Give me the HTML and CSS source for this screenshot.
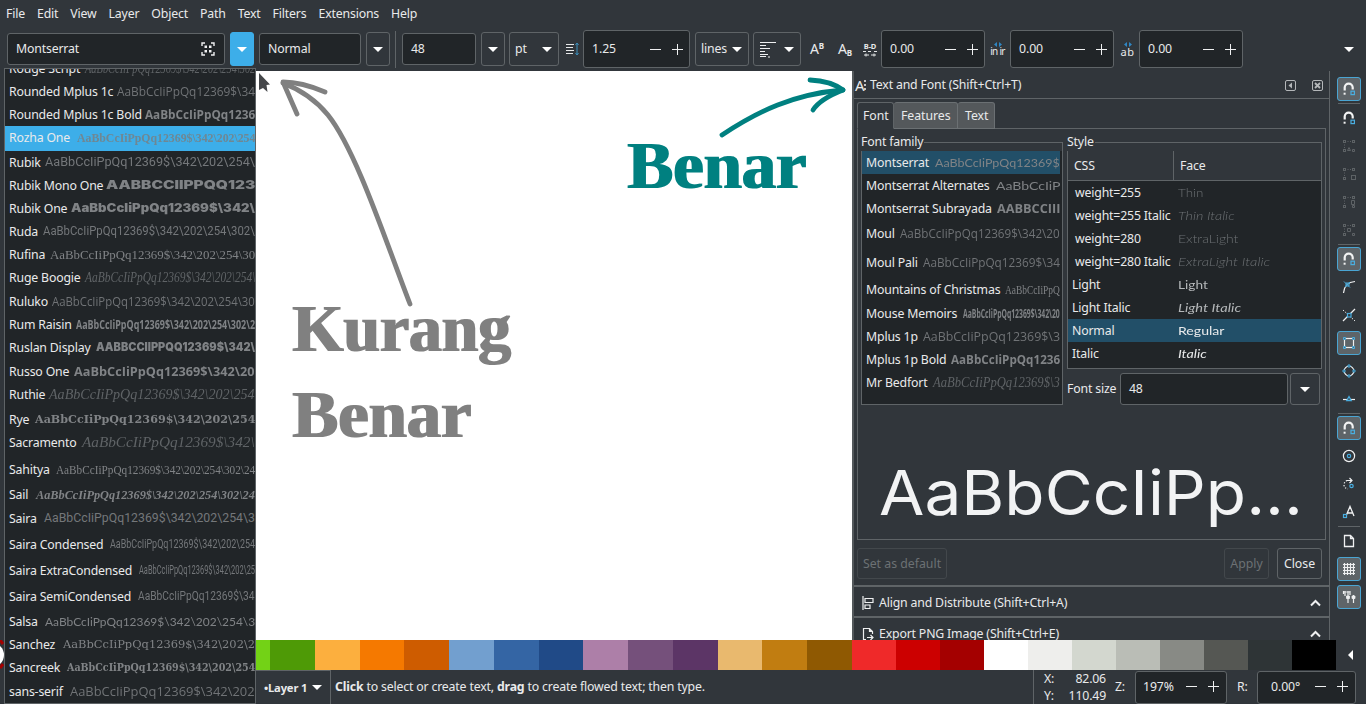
FILE: index.html
```html
<!DOCTYPE html>
<html lang="en">
<head>
<meta charset="utf-8">
<title>Text and Font</title>
<link rel="stylesheet" href="styles.css">
</head>
<body>
<svg class="defs" width="0" height="0">
  <defs>
    <filter id="fatten" x="-5%" y="-5%" width="110%" height="110%" color-interpolation-filters="sRGB"><feMorphology operator="dilate" radius="1 0"/></filter>
    <symbol id="magnet" viewBox="0 0 16 16"><path d="M3.700 9.500V6.600a4 4 0 0 1 8 0v2" fill="none" stroke="#f2f3f3" stroke-width="2.200"/><path d="M2.600 11.700h2v2h-2z" fill="#f2f3f3"/><rect x="10" y="10.200" width="3.400" height="3.400" fill="none" stroke="#4aaee0" stroke-width="1.200"/></symbol>
    <symbol id="nodes" viewBox="0 0 16 16"><g fill="none" stroke="#686d70"><rect x="2.5" y="2.5" width="2" height="2"/><rect x="11.5" y="2.5" width="2" height="2"/><rect x="2.5" y="11.5" width="2" height="2"/><path d="M6.5 3.5h1m1.500 0h1M3.500 6.500v1m0 1.500v1"/></g></symbol>
  </defs>
</svg>
<div class="app">
  <nav class="menubar"><span>File</span><span>Edit</span><span>View</span><span>Layer</span><span>Object</span><span>Path</span><span>Text</span><span>Filters</span><span>Extensions</span><span>Help</span></nav>

  <div class="toolbar">
    <div class="entry family">Montserrat<svg width="14" height="14" viewBox="0 0 14 14"><path d="M1 4V1h3M10 1h3v3M13 10v3h-3M4 13H1v-3" fill="none" stroke="#eff0f1" stroke-width="1.4"/><path d="M3.500 3.500h2.500v2.500h-2.500zM8 3.500h2.500v2.500h-2.500zM3.500 8h2.500v2.500h-2.500zM8 8h2.500v2.500h-2.500z" fill="#eff0f1"/></svg></div>
    <div class="btn drop active"><i class="tri"></i></div>
    <div class="entry weight">Normal</div>
    <div class="btn drop"><i class="tri"></i></div>
    <div class="vsep"></div>
    <div class="entry size">48</div>
    <div class="btn drop size-drop"><i class="tri"></i></div>
    <div class="btn combo unit">pt<i class="tri"></i></div>
    <svg class="lh-icon" width="14" height="14" viewBox="0 0 14 14"><path d="M1 2.500h8M1 5.500h7M1 8.500h8M1 11.500h7" stroke="#e6e8e9" stroke-width="1.100"/><path d="M12 1.500v11M10.500 3l1.500-2 1.500 2M10.500 11l1.500 2 1.500-2" fill="none" stroke="#3c8fbd" stroke-width="1"/></svg>
    <div class="spin line">1.25<i class="minus"></i><i class="plus"></i></div>
    <div class="btn combo lines">lines<i class="tri"></i></div>
    <div class="btn combo align"><svg width="17" height="17" viewBox="0 0 17 17"><path d="M0 1.500h16M0 4.500h6M0 7.500h10M0 10.500h5M0 13.500h8M0 15.500h6M8 16h2" stroke="#eff0f1" stroke-width="1.200"/></svg><i class="tri"></i></div>
    <div class="script-btn sup">A<small>B</small></div>
    <div class="script-btn sub">A<small>B</small></div>
    <div class="kern-icon bd"><b>B-D</b><svg width="14" height="7" viewBox="0 0 14 7"><path d="M0 1.500h3M5 1.500h3M11 1.500h3M1 5h5M8 5h5M3 3.500v3M11 3.500v3" stroke="#e3e5e6"/></svg></div>
    <div class="spin">0.00<i class="minus"></i><i class="plus"></i></div>
    <div class="kern-icon"><svg width="10" height="5" viewBox="0 0 10 5"><path d="M4 0v5L1 2.500zM6 0v5l3-2.500z" fill="#2f86c4"/></svg><span>in ir</span></div>
    <div class="spin">0.00<i class="minus"></i><i class="plus"></i></div>
    <div class="kern-icon wide"><svg width="10" height="5" viewBox="0 0 10 5"><path d="M4 0v5L1 2.500zM6 0v5l3-2.500z" fill="#2f86c4"/></svg><span>ab</span></div>
    <div class="spin">0.00<i class="minus"></i><i class="plus"></i></div>
    <i class="tri more"></i>
  </div>

  <div class="main">
    <svg class="canvas" width="596" height="569" viewBox="256 71 596 569">
      <path d="M259 73l11 11.500-3.500.5 1 7-4.500-4-4 2z" fill="#45474a"/>
      <g fill="none" stroke="#808080" stroke-width="4.800" stroke-linecap="round" stroke-linejoin="round"><path d="M410 304C386 242 356 150 328 115C315 99 301 90 283 83"/><path d="M325 92C311 86 298 82 283 82L297 114"/></g>
      <g fill="none" stroke="#008080" stroke-width="4.800" stroke-linecap="round" stroke-linejoin="round"><path d="M722 135C758 111 794 94 843 90"/><path d="M810 80Q831 81 843 90Q820 99 813 110"/></g>
      <g class="art" filter="url(#fatten)">
        <text x="627.500" y="188" textLength="179" lengthAdjust="spacingAndGlyphs" class="teal">Benar</text>
        <text x="292.500" y="351" textLength="218.500" lengthAdjust="spacingAndGlyphs">Kurang</text>
        <text x="292.500" y="437" textLength="179" lengthAdjust="spacingAndGlyphs">Benar</text>
      </g>
    </svg>

    <section class="dock">
      <header class="dock-title"><span class="a-icon">A<svg width="3" height="10" viewBox="0 0 3 10"><path d="M1 0v2M1 4v2M1 8v2" stroke="#e6e7e8" stroke-width="1.600"/></svg></span><span class="grow">Text and Font (Shift+Ctrl+T)</span>
        <svg width="11" height="11" viewBox="0 0 11 11"><rect x=".5" y=".5" width="10" height="10" rx="1.500" fill="none" stroke="#b4b7b9"/><path d="M7 2.500v6L3.500 5.500z" fill="#b4b7b9"/></svg>
        <svg width="11" height="11" viewBox="0 0 11 11"><rect x=".5" y=".5" width="10" height="10" rx="1.500" fill="none" stroke="#b4b7b9"/><path d="M3 3l5 5M8 3l-5 5" stroke="#b4b7b9" stroke-width="1.800"/></svg>
      </header>
      <div class="dock-body">
        <div class="tabs"><div class="tab on">Font</div><div class="tab">Features</div><div class="tab last">Text</div></div>
        <div class="page">
          <div class="page-cols">
            <div class="frame families"><span class="legend">Font family</span><div class="font-list" id="families"></div></div>
            <div class="style-col">
              <div class="frame styles"><span class="legend">Style</span>
                <div class="thead"><span>CSS</span><span>Face</span></div>
                <div id="faces"></div>
              </div>
              <div class="size-row"><label>Font size</label><div class="entry">48</div><div class="btn"><i class="tri"></i></div></div>
            </div>
          </div>
          <svg class="preview" width="460" height="90" viewBox="862 450 460 90"><text x="880" y="515" textLength="424" lengthAdjust="spacingAndGlyphs">AaBbCcIiPp...</text></svg>
        </div>
        <div class="actions"><div class="btn off">Set as default</div><div class="btn off apply">Apply</div><div class="btn close">Close</div></div>
      </div>
      <div class="fold"><svg width="12" height="14" viewBox="0 0 12 14"><path d="M1 0v14M3 2.500h8v4H3zM3 9h5v3.500H3z" fill="none" stroke="#eff0f1" stroke-width="1.200"/></svg><span class="grow">Align and Distribute (Shift+Ctrl+A)</span><svg width="11" height="8" viewBox="0 0 11 8"><path d="M1 6.500l4.500-4.500L10 6.500" fill="none" stroke="#eff0f1" stroke-width="2"/></svg></div>
      <div class="fold"><svg width="12" height="14" viewBox="0 0 12 14"><path d="M4 12.500H1.500V1.500h6l3 3V7M7.500 1.500v3h3M5 10.500h6M8.500 8l2.500 2.500L8.500 13" fill="none" stroke="#eff0f1" stroke-width="1.200"/></svg><span class="grow">Export PNG Image (Shift+Ctrl+E)</span><svg width="11" height="8" viewBox="0 0 11 8"><path d="M1 6.500l4.500-4.500L10 6.500" fill="none" stroke="#eff0f1" stroke-width="2"/></svg></div>
    </section>

    <aside class="snapbar">
      <div class="snap on"><svg><use href="#magnet"/></svg></div><hr>
      <div class="snap"><svg><use href="#magnet"/></svg></div>
      <div class="snap dim"><svg viewBox="0 0 16 16"><use href="#nodes"/><path d="M6.500 12.500L8 9.500l1.500 3zM11.500 11.500h2v2h-2z" fill="none" stroke="#686d70"/></svg></div>
      <div class="snap dim"><svg viewBox="0 0 16 16"><use href="#nodes"/><rect x="10.500" y="9.500" width="4" height="4" fill="none" stroke="#686d70"/></svg></div>
      <div class="snap dim"><svg viewBox="0 0 16 16"><use href="#nodes"/><path d="M10.500 6.500h3v4h-3zM11.500 11.500h2v2h-2z" fill="none" stroke="#686d70"/></svg></div>
      <div class="snap dim"><svg viewBox="0 0 16 16"><use href="#nodes"/><path d="M6.500 6.500h3v3h-3zM11.500 11.500h2v2h-2z" fill="none" stroke="#686d70"/></svg></div>
      <hr>
      <div class="snap on"><svg><use href="#magnet"/></svg></div>
      <div class="snap"><svg viewBox="0 0 16 16"><path d="M2.500 14C3 7 7 3 14 2.500" fill="none" stroke="#eff0f1" stroke-width="1.200"/><path d="M3 2.500l6 6M9 3l-5 5M5 4h3v3H5z" fill="none" stroke="#4aaee0"/></svg></div>
      <div class="snap"><svg viewBox="0 0 16 16"><path d="M2 14L14 2" stroke="#eff0f1" stroke-width="1.300"/><path d="M2 3l12 11" stroke="#eff0f1" stroke-dasharray="1.500 1.500"/><rect x="6.500" y="6.500" width="3.500" height="3.500" fill="#31363b" stroke="#4aaee0" stroke-width="1.200"/></svg></div>
      <div class="snap on"><svg viewBox="0 0 16 16"><rect x="3.500" y="3.500" width="9" height="9" fill="none" stroke="#eff0f1" stroke-width="1.200"/><path d="M2.500 2.500h2v2h-2zM11.500 2.500h2v2h-2zM2.500 11.500h2v2h-2zM11.500 11.500h2v2h-2z" fill="#5e6468" stroke="#4aaee0"/></svg></div>
      <div class="snap"><svg viewBox="0 0 16 16"><circle cx="8" cy="8" r="4.800" fill="none" stroke="#eff0f1" stroke-width="1.200"/><path d="M7 2h2v2H7zM7 12h2v2H7zM2 7h2v2H2zM12 7h2v2h-2z" fill="#31363b" stroke="#4aaee0"/></svg></div>
      <div class="snap"><svg viewBox="0 0 16 16"><path d="M2 8.500h12" stroke="#eff0f1" stroke-width="1.200"/><path d="M8 5.500l2.200 4H5.800z" fill="#31363b" stroke="#4aaee0" stroke-width="1.300"/></svg></div>
      <hr>
      <div class="snap on"><svg><use href="#magnet"/></svg></div>
      <div class="snap"><svg viewBox="0 0 16 16"><circle cx="8" cy="8" r="5.600" fill="none" stroke="#eff0f1" stroke-width="1.200"/><circle cx="8" cy="8" r="1.700" fill="none" stroke="#4aaee0" stroke-width="1.200"/></svg></div>
      <div class="snap"><svg viewBox="0 0 16 16"><path d="M9 4.500H6Q3 6 3 9t4 4" fill="none" stroke="#eff0f1" stroke-width="1.200" stroke-dasharray="1.300 1.600"/><path d="M6 4.500h5M8.500 2l2.500 2.500L8.500 7" fill="none" stroke="#eff0f1" stroke-width="1.200"/><circle cx="10.500" cy="10" r="1.700" fill="none" stroke="#4aaee0" stroke-width="1.200"/></svg></div>
      <div class="snap"><svg viewBox="0 0 16 16"><path d="M5 12L9 2.500 13 12M6.500 9h5" fill="none" stroke="#eff0f1" stroke-width="1.300"/><rect x="2.500" y="10.500" width="3" height="3" fill="#31363b" stroke="#4aaee0" stroke-width="1.200"/></svg></div>
      <hr>
      <div class="snap"><svg viewBox="0 0 16 16"><path d="M3.500 2.500h6l3 3v8h-9zM9.500 2.500v3h3" fill="none" stroke="#eff0f1" stroke-width="1.300"/></svg></div>
      <div class="snap on"><svg viewBox="0 0 16 16"><path d="M2 3.500h12M2 6.500h12M2 9.500h12M2 12.500h12M3.500 2v12M6.500 2v12M9.500 2v12M12.500 2v12" stroke="#eff0f1" stroke-width="1.200"/></svg></div>
      <div class="snap on"><svg viewBox="0 0 16 16"><path d="M4 2v5M2.500 2v3M7 2v12M9 2v4M12.500 6v8" stroke="#eff0f1" stroke-width="1.200"/><path d="M2 3h7M5.500 7h3v2.500h-3zM11 7h3v2.500h-3z" fill="#eff0f1" stroke="#eff0f1" stroke-width=".8"/></svg></div>
    </aside>
  </div>

  <div class="palette">
    <div class="edge"><svg width="5" height="30" viewBox="0 0 5 30"><circle cx="-8" cy="15" r="12" fill="#fff"/><path d="M0 0l3 4M0 28l3-4" stroke="#a40000" stroke-width="3"/></svg></div>
    <div class="swatches hues"><i class="lime"></i><i class="c1"></i><i class="c2"></i><i class="c3"></i><i class="c4"></i><i class="c5"></i><i class="c6"></i><i class="c7"></i><i class="c8"></i><i class="c9"></i><i class="c10"></i><i class="c11"></i><i class="c12"></i><i class="c13"></i></div>
    <div class="swatches greys"><i class="r1"></i><i class="r2"></i><i class="r3"></i><i class="g1"></i><i class="g2"></i><i class="g3"></i><i class="g4"></i><i class="g5"></i><i class="g6"></i><i class="g7"></i><i class="g8"></i></div>
    <svg width="30" height="30" viewBox="0 0 30 30"><path d="M17 10v10l-5-5z" fill="#fff"/></svg>
  </div>

  <footer class="status">
    <div class="layer">•Layer 1<i class="tri"></i></div>
    <div class="hint"><b>Click</b> to select or create text, <b>drag</b> to create flowed text; then type.</div>
    <div class="coords"><span>X:</span><span>82.06</span><span>Y:</span><span>110.49</span></div>
    <span class="zlabel">Z:</span><div class="spin zoom">197%<i class="minus"></i><i class="plus"></i></div>
    <span class="rlabel">R:</span><div class="spin rot">0.00°<i class="minus"></i><i class="plus"></i></div>
  </footer>

  <div class="popup"><div class="font-list" id="popup-list"></div></div>
</div>
<script src="app.js"></script>
</body>
</html>
```
FILE: styles.css
```css
* { box-sizing: border-box; }
body { margin: 0; background: #31363b; overflow: hidden; }
.defs { position: absolute; }
.app { position: relative; width: 1366px; height: 704px; display: flex; flex-direction: column; overflow: hidden; font: 12.3px/18px "Noto Sans", sans-serif; letter-spacing: -.17px; color: #e9eaeb; background: #31363b; }
svg { display: block; flex: none; }
i { font-style: normal; }

.menubar { height: 27px; display: flex; align-items: center; gap: 12px; padding-left: 6px; }
.toolbar { height: 44px; display: flex; align-items: center; padding-left: 7px; }
.toolbar > * { flex: none; }
.entry { height: 32px; border: 1px solid #5f6467; border-radius: 3px; background: #212528; display: flex; align-items: center; padding: 0 9px 0 8px; }
.btn { height: 34px; border: 1px solid #5f6467; border-radius: 3px; display: flex; align-items: center; justify-content: center; }
.tri { width: 0; height: 0; border: 5px solid transparent; border-top-color: #fff; border-bottom: 0; }
.drop { width: 24px; }
.drop.active { background: #3daee9; border-color: #3daee9; margin: 0 5px; }
.entry.family { width: 218px; justify-content: space-between; }
.entry.weight { width: 102px; margin-right: 5px; }
.vsep { width: 1px; height: 37px; background: #5f6467; margin: 0 6px 0 5px; }
.entry.size { width: 74px; margin-right: 5px; }
.size-drop { width: 24px; margin-right: 4px; }
.combo { justify-content: space-between; padding: 0 6px 0 5px; }
.unit { width: 50px; }
.lh-icon { margin: 0 4px 0 6px; }
.spin { width: 104px; height: 38px; border: 1px solid #5f6467; border-radius: 3px; background: #212528; display: flex; align-items: center; padding: 0 6px 0 8px; letter-spacing: -.1px; }
.spin.line { width: 107px; margin-right: 5px; }
.minus, .plus { width: 11px; height: 11px; background: linear-gradient(#eff0f1, #eff0f1) center / 11px 1px no-repeat; }
.minus { margin-left: auto; margin-right: 11px; }
.plus { background: linear-gradient(#eff0f1, #eff0f1) center / 11px 1px no-repeat, linear-gradient(#eff0f1, #eff0f1) center / 1px 11px no-repeat; }
.lines { width: 54px; margin-right: 4px; }
.align { width: 48px; padding-left: 6px; margin-right: 9px; }
.script-btn { width: 14px; height: 20px; display: flex; font: 14px/20px "Noto Sans", sans-serif; margin-right: 14px; }
.script-btn small { font-size: 8px; line-height: 13px; font-weight: 700; }
.script-btn.sub { margin-right: 11px; }
.sub small { padding-top: 7px; }
.kern-icon { width: 25px; display: flex; flex-direction: column; align-items: center; font: 10px/9px "Noto Sans", sans-serif; letter-spacing: -.7px; }
.kern-icon.bd { width: 14px; margin-right: 4px; font-size: 7.5px; line-height: 8px; letter-spacing: -.2px; }
.kern-icon.wide { font-size: 11px; letter-spacing: .5px; padding-left: 2px; }
.more { margin-left: 101px; }

.main { height: 569px; display: flex; padding-left: 256px; }
.canvas { background: #fff; }
.art text { font: 700 68px "Liberation Serif", serif; letter-spacing: 0; fill: #808080; }
.art .teal { fill: #008080; }

.dock { width: 478px; overflow: hidden; border-left: 2px solid #53585b; border-right: 1px solid #5f6467; display: flex; flex-direction: column; }
.dock > * { flex: none; }
.grow { flex: 1; }
.dock-title { height: 27px; display: flex; align-items: center; padding: 1px 6px 0 1px; gap: 0; }
.dock-title > svg { margin-left: 16px; }
.a-icon { display: flex; align-items: center; width: 15px; font-size: 15px; font-weight: 400; }
.dock-body { height: 489px; border-top: 1px solid #5f6467; border-bottom: 2px solid #5f6467; padding: 3px 3px 0 3px; }
.tabs { display: flex; height: 27px; position: relative; z-index: 1; }
.tab { height: 27px; border: 1px solid #6b7073; border-left: 0; border-radius: 3px 3px 0 0; background: #54585b; padding: 4px 7px; width: 64px; text-align: center; letter-spacing: -.05px; }
.tab.on { width: 37px; padding: 4px 5px; background: #31363b; border: 1px solid #5f6467; border-bottom-color: #31363b; }
.tab.last { width: 37px; }
.page { height: 412px; margin-top: -1px; border: 1px solid #5f6467; padding: 4px 3px 0; }
.page-cols { display: flex; gap: 4px; padding-top: 9px; height: 317px; }
.frame { position: relative; border: 1px solid #5f6467; }
.legend { position: absolute; left: -1px; top: -10px; background: #31363b; padding-right: 1px; }
.families { width: 202px; height: 263px; background: #212528; padding: 8px 2px 0 0; overflow: visible; }
.families::before { content: ""; position: absolute; left: 0; right: 0; top: 0; height: 8px; background: #31363b; }
.families .legend { z-index: 1; }
.families .name { padding-left: 4px; }
.style-col { width: 255px; }
.styles { height: 227px; background: #212528; }
.thead { height: 38px; background: #31363b; border-bottom: 1px solid #5f6467; display: flex; padding-top: 8px; }
.thead span { flex: 1; padding: 6px 0 0 6px; }
.thead span:first-child { flex: 0 0 106px; border-right: 1px solid #5f6467; }
.face-row { height: 23px; line-height: 23.500px; display: flex; white-space: nowrap; }
.face-row.sel, .font-row.sel { background: #224f68; }
.face-row > :first-child { flex: 0 0 110px; padding-left: 4px; }
.face-row.odd > :first-child { padding-left: 7px; }
.size-row { display: flex; align-items: center; margin-top: 4px; }
.size-row label { width: 53px; padding-bottom: 1px; }
.size-row .entry { width: 168px; margin-right: 2px; }
.size-row .btn { width: 30px; height: 32px; }
.preview text { font: 400 62px Inter, sans-serif; letter-spacing: 0; fill: #f2f3f4; }
.actions { display: flex; padding: 8px 4px 0 0; letter-spacing: 0; }
.actions .btn { height: 31px; width: 45px; }
.actions .btn.off { color: #6c7174; border-color: #43484c; }
.actions .btn.off:first-child { width: 90px; }
.actions .apply { margin: 0 8px 0 auto; }
.fold { height: 31px; border-bottom: 2px solid #5f6467; display: flex; align-items: center; padding: 2px 8px 0; gap: 5px; }

.snapbar { width: 36px; padding: 6px 0 0 7px; display: flex; flex-direction: column; gap: 4.050px; }
.snap { width: 24px; height: 24px; padding: 3px; border: 1px solid transparent; flex: none; border-radius: 3px; }
.snap svg { width: 16px; height: 16px; }
.snap.on { background: #5e6468; border-color: #4aa5d3; }
.snap.dim { opacity: .8; }
.snapbar hr { width: 22px; height: 1px; margin: -2.200px 0 -2px 1px; border: 0; background: #5f6467; flex: none; }

.palette { height: 30px; display: flex; }
.edge { width: 256px; }
.swatches { display: flex; }
.swatches i { flex: 1; }
.hues { width: 596px; }
.greys { width: 484px; }
.swatches .lime { flex: 0 0 14px; background: #73d216; }
.c1 { background: #4e9a06; } .c2 { background: #fcaf3e; } .c3 { background: #f57900; } .c4 { background: #ce5c00; }
.c5 { background: #729fcf; } .c6 { background: #3465a4; } .c7 { background: #204a87; } .c8 { background: #ad7fa8; }
.c9 { background: #75507b; } .c10 { background: #5c3566; } .c11 { background: #e9b96e; } .c12 { background: #c17d11; }
.c13 { background: #8f5902; } .r1 { background: #ef2929; } .r2 { background: #c00; } .r3 { background: #a40000; }
.g1 { background: #fff; } .g2 { background: #eeeeec; } .g3 { background: #d3d7cf; } .g4 { background: #babdb6; }
.g5 { background: #888a85; } .g6 { background: #555753; } .g7 { background: #2e3436; } .g8 { background: #000; }

.status { height: 34px; display: flex; align-items: center; padding-left: 256px; }
.layer { width: 75px; height: 34px; border: 1px solid #5f6467; border-left: 0; border-bottom: 0; display: flex; align-items: center; justify-content: space-between; padding: 0 8px; font-weight: 700; font-size: 11.200px; }
.hint { padding-left: 4px; width: 702px; }
.coords { width: 73px; height: 34px; border-left: 1px solid #5f6467; padding-left: 10px; display: grid; grid-template-columns: 20px 42px; line-height: 17px; }
.coords span:nth-child(even) { text-align: right; }
.zlabel { width: 29px; padding-left: 9px; }
.status .spin { height: 33px; padding: 0 7px 1px; }
.zoom { width: 92px; }
.rlabel { width: 30px; padding-left: 10px; }
.rot { width: 99px; }
.status .rot { padding-left: 13px; }

.popup { position: absolute; left: 4px; top: 68px; width: 252px; height: 636px; background: #212528; border: 1px solid #5f6467; overflow: hidden; }
.popup .font-list { margin-top: -12px; }
.popup .name { padding-left: 4px; }
.popup .font-row.sel { background: #3daee9; }
.popup .font-row.sel .sample { color: #6f8793; }
.font-list { overflow: hidden; }
.font-row { display: flex; line-height: 23.500px; white-space: nowrap; overflow: hidden; }
.name { flex: none; }
.sample { flex: none; display: inline-block; transform-origin: 0 50%; color: #808386; letter-spacing: 0; }
.s-sans { font-family: Roboto, sans-serif; font-weight: 400; color: #74777a; }
.s-mont { font-family: Lato, sans-serif; }
.s-open { font-family: "Open Sans", sans-serif; font-weight: 400; color: #707376; }
.s-bold { font-family: "Open Sans", sans-serif; font-weight: 700; }
.s-black { font-family: Inter, sans-serif; font-weight: 900; font-size: 11.500px; }
.s-serif { font-family: "Liberation Serif", serif; font-size: 13.500px; }
.s-slab { font-family: "DejaVu Serif", serif; font-size: 11.500px; }
.s-sbold { font-family: "DejaVu Serif", serif; font-weight: 700; font-size: 11.500px; }
.s-fat { font-family: "Liberation Serif", serif; font-weight: 700; font-size: 13px; }
.s-script { font-family: "Liberation Serif", serif; font-style: italic; font-size: 14px; color: #5f6366; }
.s-sail { font-family: "Liberation Serif", serif; font-style: italic; font-weight: 700; font-size: 13px; }
.face { font-family: Lato, sans-serif; display: inline-block; transform-origin: 0 50%; letter-spacing: 0; }
.f-dim { color: #6c7073; font-weight: 300; }
.f-light { color: #b4b7b9; }
.f-reg { color: #e9eaeb; }
.it { font-style: italic; }
```
FILE: app.js
```js
const BASE = 'AaBbCcIiPpQq12369$';
const CAPS = 'AABBCCIIPPQQ12369$';
const fonts = [
  // name, row height, sample offset, sample text, sample class
  ['Rouge Script', 23, 80, BASE + '\\342\\202\\254\\302', 's-script'],
  ['Rounded Mplus 1c', 23, 112, BASE + '\\34', 's-open'],
  ['Rounded Mplus 1c Bold', 23, 140, 'AaBbCcIiPpQq1236', 's-bold'],
  ['Rozha One', 25, 72, BASE + '\\342\\202\\254', 's-fat', true],
  ['Rubik', 23, 40, BASE + '\\342\\202\\254\\', 's-sans'],
  ['Rubik Mono One', 23, 101, 'AABBCCIIPPQQ123', 's-black'],
  ['Rubik One', 23, 66, BASE + '\\342\\', 's-black'],
  ['Ruda', 23, 38, BASE + '\\342\\202\\254\\302\\', 's-sans'],
  ['Rufina', 23, 45, BASE + '\\342\\202\\254\\30', 's-serif'],
  ['Ruge Boogie', 24, 80, BASE + '\\342\\202\\254\\', 's-script'],
  ['Ruluko', 23, 47, BASE + '\\342\\202\\254\\30', 's-open'],
  ['Rum Raisin', 23, 71, BASE + '\\342\\202\\254\\302\\2', 's-bold'],
  ['Ruslan Display', 24, 91, CAPS + '\\342\\', 's-black'],
  ['Russo One', 23, 69, BASE + '\\342\\20', 's-bold'],
  ['Ruthie', 25, 44, BASE + '\\342\\202\\254', 's-script'],
  ['Rye', 23, 30, BASE + '\\342\\202\\254', 's-sbold'],
  ['Sacramento', 27, 77, BASE + '\\342\\', 's-script'],
  ['Sahitya', 25, 51, BASE + '\\342\\202\\254\\302\\24', 's-serif'],
  ['Sail', 24, 31, BASE + '\\342\\202\\254\\302\\24', 's-sail'],
  ['Saira', 26, 39, BASE + '\\342\\202\\254\\3', 's-sans'],
  ['Saira Condensed', 26, 105, BASE + '\\342\\202\\254', 's-sans'],
  ['Saira ExtraCondensed', 26, 134, BASE + '\\342\\202\\25', 's-sans'],
  ['Saira SemiCondensed', 25, 133, BASE + '\\34', 's-sans'],
  ['Salsa', 23, 40, BASE + '\\342\\202\\254\\3', 's-mont'],
  ['Sanchez', 23, 58, BASE + '\\342\\202\\2', 's-slab'],
  ['Sancreek', 24, 62, BASE + '\\342\\202\\254', 's-sbold'],
  ['sans-serif', 23, 65, BASE + '\\342\\202', 's-open'],
];
const families = [
  ['Montserrat', 23, 73, BASE, 's-mont', true],
  ['Montserrat Alternates', 23, 134, 'AaBbCcIiP', 's-mont'],
  ['Montserrat Subrayada', 25, 135, 'AABBCCIII', 's-bold'],
  ['Moul', 29, 38, BASE + '\\342\\20', 's-open'],
  ['Moul Pali', 27, 61, BASE + '\\34', 's-open'],
  ['Mountains of Christmas', 24, 143, 'AaBbCcIiPpQ', 's-serif'],
  ['Mouse Memoirs', 23, 101, BASE + '\\342\\20', 's-bold'],
  ['Mplus 1p', 23, 61, BASE + '\\3', 's-open'],
  ['Mplus 1p Bold', 23, 89, 'AaBbCcIiPpQq1236', 's-bold'],
  ['Mr Bedfort', 23, 71, BASE + '\\3', 's-script'],
];
const faces = [
  ['weight=255', 'Thin', 25, 'f-dim', true],
  ['weight=255 Italic', 'Thin Italic', 57, 'f-dim it', true],
  ['weight=280', 'ExtraLight', 60, 'f-dim', true],
  ['weight=280 Italic', 'ExtraLight Italic', 92, 'f-dim it', true],
  ['Light', 'Light', 30, 'f-light'],
  ['Light Italic', 'Light Italic', 63, 'f-light it'],
  ['Normal', 'Regular', 47, 'f-reg', false, true],
  ['Italic', 'Italic', 29, 'f-reg it'],
];

function span(cls, text) {
  const el = document.createElement('span');
  el.className = cls;
  el.textContent = text;
  return el;
}
// Stretch an inline block horizontally to the given width.
function fit(el, width) {
  el.style.transform = `scaleX(${width / el.offsetWidth})`;
}
function fillFonts(id, rows, width) {
  const list = document.getElementById(id);
  for (const [name, height, offset, text, cls, selected] of rows) {
    const row = document.createElement('div');
    row.className = 'font-row' + (selected ? ' sel' : '');
    row.style.height = height + 'px';
    const label = span('name', name);
    label.style.width = offset + 'px';
    const sample = span('sample ' + cls, text);
    row.append(label, sample);
    list.append(row);
    fit(sample, width - offset);
  }
}
fillFonts('popup-list', fonts, 250);
fillFonts('families', families, 198);
for (const [css, face, width, cls, indented, selected] of faces) {
  const row = document.createElement('div');
  row.className = 'face-row' + (indented ? ' odd' : '') + (selected ? ' sel' : '');
  const holder = document.createElement('div');
  const label = span('face ' + cls, face);
  holder.append(label);
  row.append(span('', css), holder);
  document.getElementById('faces').append(row);
  fit(label, width);
}
```
